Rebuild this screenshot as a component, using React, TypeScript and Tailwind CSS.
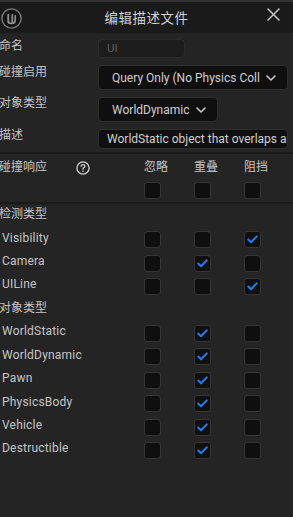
import React from "react";

const FONT = { fontFamily: 'Roboto, "Noto Sans CJK SC", "Noto Sans", sans-serif' };

function Check({ on }: { on?: boolean }) {
  return (
    <div className="w-[17px] h-[17px] rounded-[3px] bg-[#0f0f0f] border border-[#353535] flex items-center justify-center">
      {on && (
        <svg width="11" height="9" viewBox="0 0 11 9">
          <path d="M1.2 4.6 L4 7.2 L9.8 1.4" fill="none" stroke="#1f7ff0" strokeWidth="2" strokeLinecap="round" strokeLinejoin="round" />
        </svg>
      )}
    </div>
  );
}

function Chevron() {
  return (
    <svg width="10" height="6" viewBox="0 0 10 6">
      <path d="M1 1 L5 5 L9 1" fill="none" stroke="#cfcfcf" strokeWidth="1.5" strokeLinecap="round" strokeLinejoin="round" />
    </svg>
  );
}

type Row = { name: string; v: [boolean, boolean, boolean] };

const trace: Row[] = [
  { name: "Visibility", v: [false, false, true] },
  { name: "Camera", v: [false, true, false] },
  { name: "UILine", v: [false, false, true] },
];
const objs: Row[] = [
  { name: "WorldStatic", v: [false, true, false] },
  { name: "WorldDynamic", v: [false, true, false] },
  { name: "Pawn", v: [false, true, false] },
  { name: "PhysicsBody", v: [false, true, false] },
  { name: "Vehicle", v: [false, true, false] },
  { name: "Destructible", v: [false, true, false] },
];

function CheckRow({ r }: { r: Row }) {
  return (
    <div className="grid grid-cols-[144px_50px_50px_50px] h-[23.4px] items-center">
      <div className="pl-[2px] pb-[4px] text-[12px] leading-[14px] text-[#c4c4c4] tracking-[0.2px]">{r.name}</div>
      <div><Check on={r.v[0]} /></div>
      <div><Check on={r.v[1]} /></div>
      <div><Check on={r.v[2]} /></div>
    </div>
  );
}

export default function App() {
  return (
    <div className="w-[293px] h-[517px] bg-[#242424] overflow-hidden flex flex-col" style={FONT}>
      {/* title bar */}
      <div className="h-[33px] bg-[#1a1a1a] border-t-[2px] border-[#313131] relative flex items-center justify-center shrink-0">
        <svg className="absolute left-[1px] top-[6px]" width="21" height="21" viewBox="0 0 21 21">
          <circle cx="10.5" cy="10.5" r="9.6" fill="#131313" stroke="#7a7a7a" strokeWidth="1.4" />
          <path d="M6.3 6.6 L8.2 5.6 L8.2 12.8 Q8.2 14.4 9.6 14.4 L10.4 14.4 L10.4 6.8 L12.2 5.8 L12.2 14.3 Q13.4 13.4 13.4 12 L13.4 7.6 L15 6.8 L15 12.4 Q15 15.8 11.2 16.2 L9.6 16.2 Q6.3 16 6.3 13.2 Z" fill="#8e8e8e" />
        </svg>
        <div className="text-[13.5px] text-[#d2d2d2] mt-[1px] tracking-[0.5px]">编辑描述文件</div>
        <svg className="absolute left-[267px] top-[6px]" width="13" height="13" viewBox="0 0 13 13">
          <path d="M1 1 L12 12 M12 1 L1 12" stroke="#c8c8c8" strokeWidth="1.5" strokeLinecap="round" />
        </svg>
      </div>

      {/* properties */}
      <div className="flex flex-col pt-[6px] shrink-0">
        <div className="flex items-start h-[19px]">
          <div className="w-[99px] -ml-[1px] text-[12px] leading-[14px] text-[#c4c4c4]">命名</div>
          <div className="w-[87px] h-[19px] rounded-[4px] bg-[#1d1d1d] border border-[#2c2c2c] flex items-center pl-[8px] text-[11.5px] text-[#5e5e5e]">UI</div>
        </div>
        <div className="flex items-start h-[25px] mt-[7px]">
          <div className="w-[99px] -ml-[1px] text-[12px] leading-[14px] text-[#c4c4c4]">碰撞启用</div>
          <div className="w-[190px] h-[25px] rounded-[4px] bg-[#0f0f0f] border border-[#2e2e2e] flex items-center pl-[13px] gap-[6px] text-[12px] text-[#cfcfcf] overflow-hidden whitespace-nowrap">
            <span>Query Only (No Physics Coll</span>
            <Chevron />
          </div>
        </div>
        <div className="flex items-start h-[25px] mt-[7px]">
          <div className="w-[99px] -ml-[1px] -mt-[1px] text-[12px] leading-[14px] text-[#c4c4c4]">对象类型</div>
          <div className="w-[120px] h-[25px] rounded-[4px] bg-[#0f0f0f] border border-[#2e2e2e] flex items-center pl-[13px] gap-[6px] text-[12px] text-[#cfcfcf] whitespace-nowrap">
            <span>WorldDynamic</span>
            <Chevron />
          </div>
        </div>
        <div className="flex items-start h-[19px] mt-[7px]">
          <div className="w-[99px] -ml-[1px] -mt-[1px] text-[12px] leading-[14px] text-[#c4c4c4]">描述</div>
          <div className="w-[190px] h-[20px] rounded-[4px] bg-[#0f0f0f] border border-[#2e2e2e] flex items-center pl-[8px] text-[12px] text-[#cfcfcf] overflow-hidden whitespace-nowrap">
            WorldStatic object that overlaps all actors
          </div>
        </div>
      </div>

      <div className="h-[2px] bg-[#1a1a1a] mt-[4px] shrink-0" />

      {/* collision response header */}
      <div className="h-[48px] shrink-0 flex flex-col">
        <div className="grid grid-cols-[144px_50px_50px_50px] h-[26px] items-center">
          <div className="flex items-center">
            <div className="w-[77px] -ml-[1px] text-[12px] leading-[14px] text-[#c4c4c4]">碰撞响应</div>
            <svg width="14" height="14" viewBox="0 0 14 14" className="mt-[2px]">
              <circle cx="7" cy="7" r="6.1" fill="none" stroke="#cfcfcf" strokeWidth="1.3" />
              <path d="M5.1 5.3 Q5.1 3.6 7 3.6 Q8.9 3.6 8.9 5.2 Q8.9 6.2 7.8 6.7 Q7 7.1 7 8.2" fill="none" stroke="#cfcfcf" strokeWidth="1.3" strokeLinecap="round" />
              <circle cx="7" cy="10.2" r="0.8" fill="#cfcfcf" />
            </svg>
          </div>
          <div className="text-[12px] leading-[14px] text-[#c4c4c4]">忽略</div>
          <div className="text-[12px] leading-[14px] text-[#c4c4c4]">重叠</div>
          <div className="text-[12px] leading-[14px] text-[#c4c4c4]">阻挡</div>
        </div>
        <div className="grid grid-cols-[144px_50px_50px_50px] mt-[2px]">
          <div />
          <div><Check /></div>
          <div><Check /></div>
          <div><Check /></div>
        </div>
      </div>

      <div className="h-[2px] bg-[#1a1a1a] shrink-0" />

      <div className="h-[24px] pt-[3px] -ml-[1px] text-[12px] leading-[14px] text-[#c4c4c4] shrink-0">检测类型</div>
      {trace.map((r) => (
        <CheckRow key={r.name} r={r} />
      ))}
      <div className="h-[23.6px] pt-[3px] -ml-[1px] text-[12px] leading-[14px] text-[#c4c4c4] shrink-0">对象类型</div>
      {objs.map((r) => (
        <CheckRow key={r.name} r={r} />
      ))}
    </div>
  );
}
